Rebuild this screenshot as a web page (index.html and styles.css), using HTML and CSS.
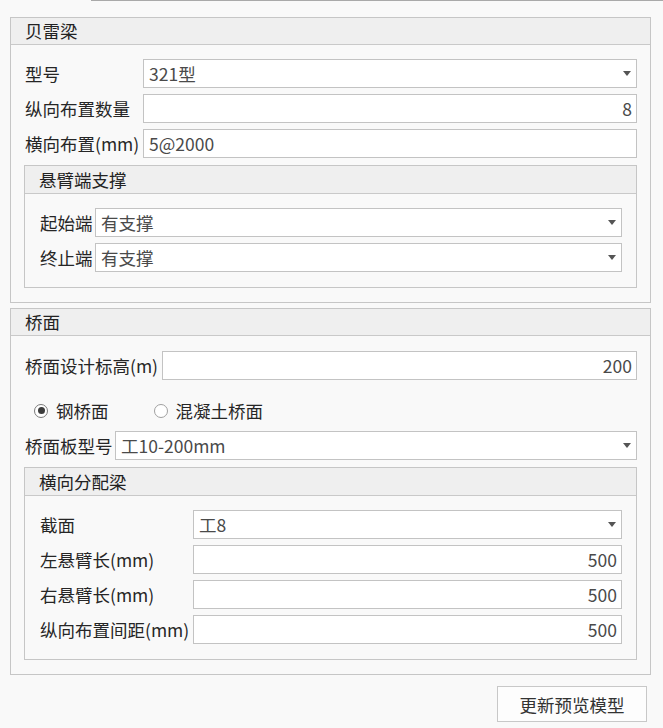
FILE: index.html
```html
<!DOCTYPE html>
<html lang="zh-CN">
<head>
<meta charset="utf-8">
<title>贝雷梁</title>
<link rel="stylesheet" href="styles.css">
</head>
<body>
<div class="topline"></div>

<section class="group g1">
  <div class="gh">贝雷梁</div>
  <div class="gb">
    <div class="grid1">
      <div class="lbl">型号</div>
      <div class="field combo"><span>321型</span><i class="arrow"></i></div>
      <div class="lbl">纵向布置数量</div>
      <div class="field num">8</div>
      <div class="lbl">横向布置(mm)</div>
      <div class="field">5@2000</div>
    </div>
    <section class="sub s1">
      <div class="sh">悬臂端支撑</div>
      <div class="sb grid-s1">
        <div class="lbl">起始端</div>
        <div class="field combo"><span>有支撑</span><i class="arrow"></i></div>
        <div class="lbl">终止端</div>
        <div class="field combo"><span>有支撑</span><i class="arrow"></i></div>
      </div>
    </section>
  </div>
</section>

<section class="group g2">
  <div class="gh">桥面</div>
  <div class="gb gb2">
    <div class="row">
      <div class="lbl w-elev">桥面设计标高(m)</div>
      <div class="field num grow">200</div>
    </div>
    <div class="radios">
      <label class="radio"><span class="dot on"></span>钢桥面</label>
      <label class="radio r2"><span class="dot"></span>混凝土桥面</label>
    </div>
    <div class="row">
      <div class="lbl w-plate">桥面板型号</div>
      <div class="field combo grow"><span>工10-200mm</span><i class="arrow"></i></div>
    </div>
    <section class="sub s2">
      <div class="sh">横向分配梁</div>
      <div class="sb grid-s2">
        <div class="lbl">截面</div>
        <div class="field combo"><span>工8</span><i class="arrow"></i></div>
        <div class="lbl">左悬臂长(mm)</div>
        <div class="field num">500</div>
        <div class="lbl">右悬臂长(mm)</div>
        <div class="field num">500</div>
        <div class="lbl">纵向布置间距(mm)</div>
        <div class="field num">500</div>
      </div>
    </section>
  </div>
</section>

<div class="actions">
  <button class="btn" type="button">更新预览模型</button>
</div>
</body>
</html>
```

FILE: styles.css
```css
* { box-sizing: border-box; }

html, body {
  margin: 0;
  padding: 0;
  background: #f9f9f9;
}

body {
  width: 663px;
  height: 728px;
  overflow: hidden;
  font-family: "Noto Sans CJK SC", "Noto Sans", sans-serif;
  font-size: 17.5px;
  color: #262626;
}

.topline {
  height: 1px;
  margin-left: 91px;
  background: #a9a9a9;
}

.group {
  margin: 16px 12px 0 10px;
  border: 1px solid #c6c6c6;
  background: #f9f9f9;
}

.g2 { margin-top: 5px; }

.gh, .sh {
  height: 27px;
  line-height: 26px;
  background: #efefef;
  border-bottom: 1px solid #c9c9c9;
  padding-left: 14px;
  color: #222;
}

.sh {
  height: 28px;
  line-height: 27px;
}

.gb {
  padding: 14px 13px 14px 13px;
}

.gb2 { padding-top: 15px; }

.lbl {
  height: 29px;
  display: flex;
  align-items: center;
  padding-left: 1px;
  white-space: nowrap;
  color: #262626;
}

.field {
  height: 29px;
  border: 1px solid #c3c3c3;
  background: #fff;
  padding: 0 4px 0 5px;
  display: flex;
  align-items: center;
  color: #4a4a4a;
  white-space: nowrap;
}

.num { justify-content: flex-end; }

.combo { justify-content: space-between; padding-right: 5px; }

.arrow {
  width: 0;
  height: 0;
  border-left: 4.5px solid transparent;
  border-right: 4.5px solid transparent;
  border-top: 5px solid #555;
}

.grid1 {
  display: grid;
  grid-template-columns: 119px 1fr;
  row-gap: 6px;
}

.sub {
  margin-top: 7px;
  border: 1px solid #c6c6c6;
  background: #f9f9f9;
}

.sb {
  padding: 14px 14px 15px 14px;
}

.grid-s1 {
  display: grid;
  grid-template-columns: 56px 1fr;
  row-gap: 6px;
}

.grid-s2 {
  display: grid;
  grid-template-columns: 154px 1fr;
  row-gap: 6px;
}

.row {
  display: flex;
}

.grow { flex: 1; }

.w-elev { width: 138px; }
.w-plate { width: 91px; }

.radios {
  display: flex;
  align-items: center;
  height: 29px;
  margin: 16px 0 6px 0;
  padding-left: 10px;
}

.radio {
  display: flex;
  align-items: center;
  gap: 8px;
  color: #262626;
}

.r2 { margin-left: 45px; }

.dot {
  flex: 0 0 auto;
  width: 14px;
  height: 14px;
  border-radius: 50%;
  border: 1px solid #a0a0a0;
  background: #fff;
  position: relative;
}

.dot.on { border-color: #7a7a7a; }

.dot.on::after {
  content: "";
  position: absolute;
  left: 2.5px;
  top: 2.5px;
  width: 7px;
  height: 7px;
  border-radius: 50%;
  background: #3c3c3c;
}

.actions {
  display: flex;
  justify-content: flex-end;
  padding-right: 16px;
  margin-top: 11px;
}

.btn {
  width: 150px;
  height: 36px;
  border: 1px solid #c8c8c8;
  background: #fdfdfd;
  font-family: inherit;
  font-size: 17.5px;
  color: #333;
  padding: 0;
}
```
